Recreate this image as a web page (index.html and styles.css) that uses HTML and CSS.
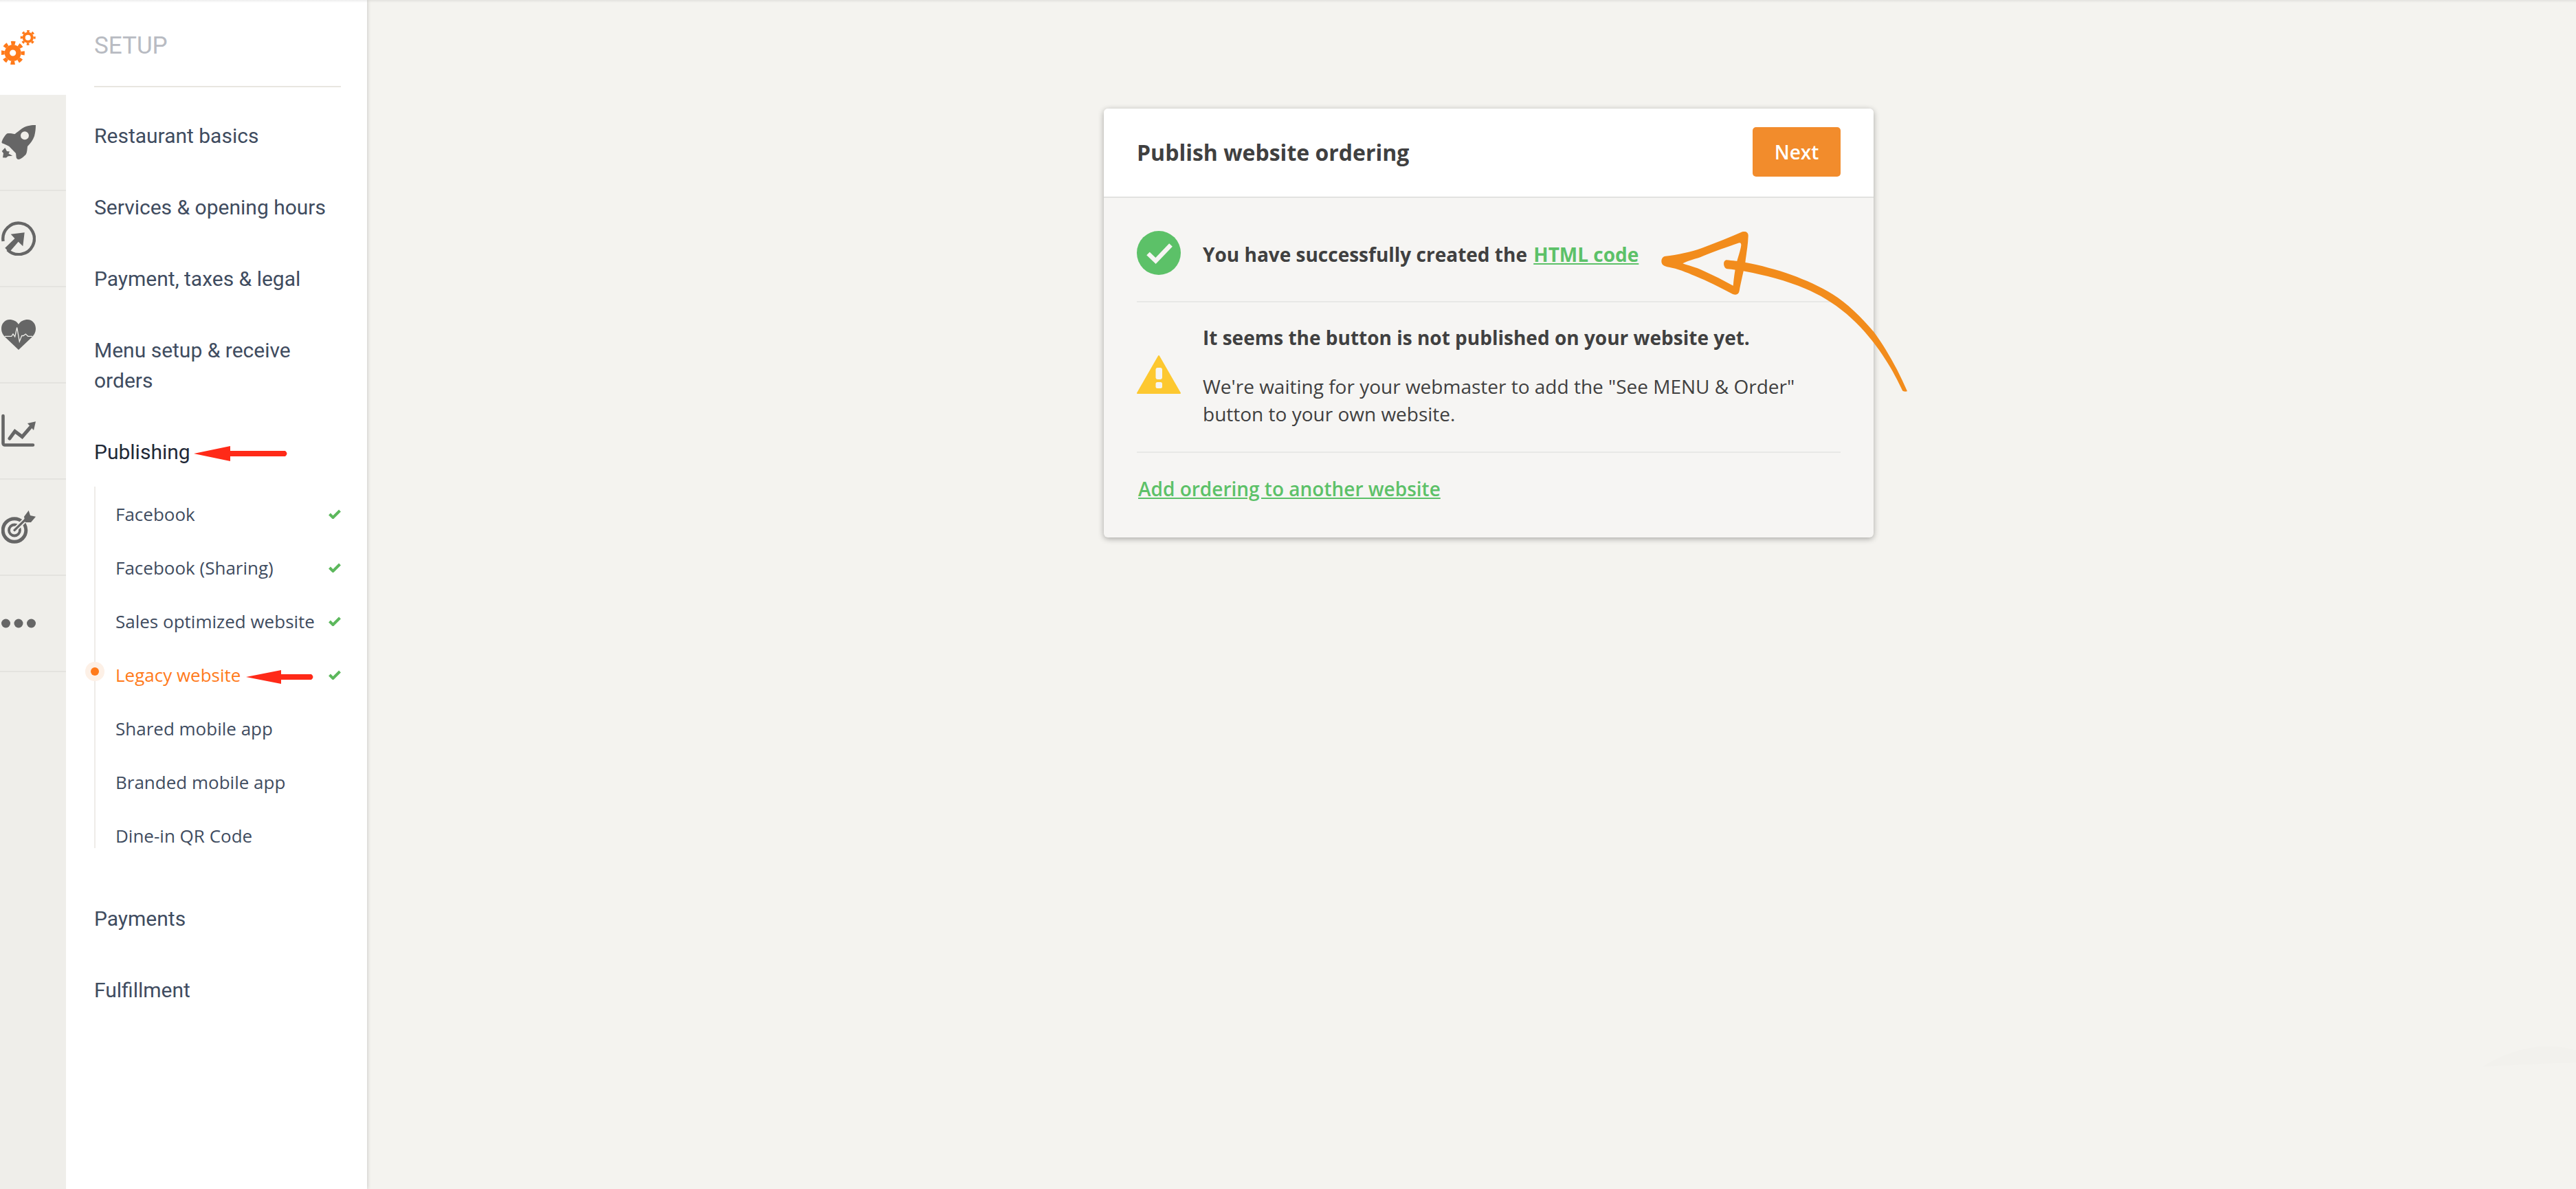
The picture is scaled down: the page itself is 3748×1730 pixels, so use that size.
FILE: index.html
```html
<!DOCTYPE html>
<html lang="en">
<head>
    <meta charset="UTF-8">
    <title>Publish website ordering</title>
    <link rel="stylesheet" href="styles.css">
</head>
<body>

    <div class="app">
        <!-- Icon rail -->
        <nav class="rail">
            <div class="rail-cell rail-cell-active">
                <svg class="rail-icon icon-orange" viewBox="0 0 50 50">
                    <circle cx="16.7" cy="33" r="8.3" fill="none" stroke="#ff7a1a" stroke-width="7.4"/>
                    <circle cx="16.7" cy="33" r="14.6" fill="none" stroke="#ff7a1a" stroke-width="5.2" stroke-dasharray="6 5.47" stroke-dashoffset="3"/>
                    <circle cx="38.7" cy="10.7" r="6" fill="none" stroke="#ff7a1a" stroke-width="4"/>
                    <circle cx="38.7" cy="10.7" r="9.4" fill="none" stroke="#ff7a1a" stroke-width="3.2" stroke-dasharray="3.6 3.78" stroke-dashoffset="1.8"/>
                </svg>
            </div>
            <div class="rail-cell">
                <svg class="rail-icon" viewBox="0 0 50 50">
                    <path fill-rule="evenodd" d="M50 0C45 0 38 0 30 5C26 8 22 11 19.7 13C15 12.5 11 11.5 8 12.5C5 15 2 20 .7 24C0 26 1 26.7 3 27C6 28 9 30 11.3 31L21 41C21.5 44 21.5 47 22 48C23 50 25 50.4 27 49.5C30 48 33 45.5 35.5 43C37.5 40 37.5 35 38 31C42 27 46 22 48 16C49.5 10 50 5 50 0ZM34 9.3A6 6 0 1 1 34 21.3A6 6 0 1 1 34 9.3Z"/>
                    <path d="M5.3 33L8 38L12 38.5L10.5 41.5L16.3 44.7L9.7 45.2L7 47.6L2 47.3L3 41L.7 38Z"/>
                </svg>
            </div>
            <div class="rail-cell">
                <svg class="rail-icon" viewBox="0 0 50 50">
                    <path d="M2.6 29A22.8 22.8 0 1 1 9 41.5" fill="none" stroke="#666" stroke-width="4.4"/>
                    <path d="M13.7 18.7L33.7 16.3L31.3 36.3L24.7 29.7L11.3 45.3L5.3 38.7L19.5 25Z"/>
                </svg>
            </div>
            <div class="rail-cell">
                <svg class="rail-icon" viewBox="0 0 50 50">
                    <path d="M25 10C22 5 17 3 12 3C5 3 0 9 0 16C0 22 3 26 6 29L25 47L44 29C47 26 50 22 50 16C50 9 45 3 38 3C33 3 28 5 25 10Z"/>
                    <path d="M5 27.3H14.7L17 24L19.7 28L22.7 14.5L26.3 35L29.7 26.5H32L35.3 24L38.7 27.3H45" fill="none" stroke="#efeeea" stroke-width="1.3"/>
                </svg>
            </div>
            <div class="rail-cell">
                <svg class="rail-icon" viewBox="0 0 50 50">
                    <path d="M2.5 3V43A2.5 2.5 0 0 0 5 45.5H46" fill="none" stroke="#666" stroke-width="4.6" stroke-linecap="round"/>
                    <path d="M12 36L19.7 25.5L30.3 33.5L42 20" fill="none" stroke="#666" stroke-width="5" stroke-linecap="round"/>
                    <path d="M50 11.3L38 14L47 24Z"/>
                </svg>
            </div>
            <div class="rail-cell">
                <svg class="rail-icon" viewBox="0 0 50 50">
                    <circle cx="19" cy="29.5" r="16.8" fill="none" stroke="#666" stroke-width="5"/>
                    <circle cx="19" cy="29.5" r="8" fill="none" stroke="#666" stroke-width="3.8"/>
                    <path d="M19 29.5L36 13" fill="none" stroke="#efeeea" stroke-width="7"/>
                    <path d="M19 29.5L37 12" fill="none" stroke="#666" stroke-width="3.2" stroke-linecap="round"/>
                    <path d="M39.7 .7L33 9.7L34.7 18H43L50 9.7L42 8Z"/>
                </svg>
            </div>
            <div class="rail-cell">
                <svg class="rail-icon" viewBox="0 0 50 50">
                    <circle cx="6.5" cy="25" r="6.5"/>
                    <circle cx="25" cy="25" r="6.5"/>
                    <circle cx="43.5" cy="25" r="6.5"/>
                </svg>
            </div>
        </nav>

        <!-- Setup menu -->
        <aside class="menu">
            <div class="menu-title">SETUP</div>
            <ul class="menu-list">
                <li class="menu-item">Restaurant basics</li>
                <li class="menu-item">Services &amp; opening hours</li>
                <li class="menu-item">Payment, taxes &amp; legal</li>
                <li class="menu-item">Menu setup &amp; receive orders</li>
                <li class="menu-item menu-item-open">Publishing</li>
                <li>
                    <ul class="sub-list">
                        <li class="sub-item">Facebook
                            <svg class="tick" viewBox="0 0 18 14"><path d="M1.5 7L6.5 12L16.5 2"/></svg>
                        </li>
                        <li class="sub-item">Facebook (Sharing)
                            <svg class="tick" viewBox="0 0 18 14"><path d="M1.5 7L6.5 12L16.5 2"/></svg>
                        </li>
                        <li class="sub-item">Sales optimized website
                            <svg class="tick" viewBox="0 0 18 14"><path d="M1.5 7L6.5 12L16.5 2"/></svg>
                        </li>
                        <li class="sub-item sub-item-active">Legacy website
                            <svg class="tick" viewBox="0 0 18 14"><path d="M1.5 7L6.5 12L16.5 2"/></svg>
                        </li>
                        <li class="sub-item">Shared mobile app</li>
                        <li class="sub-item">Branded mobile app</li>
                        <li class="sub-item sub-item-last">Dine-in QR Code</li>
                    </ul>
                </li>
                <li class="menu-item">Payments</li>
                <li class="menu-item">Fulfillment</li>
            </ul>
        </aside>

        <!-- Main content -->
        <main class="content">
            <section class="card">
                <header class="card-header">
                    <h2>Publish website ordering</h2>
                    <button class="btn-next" type="button">Next</button>
                </header>
                <div class="card-body">
                    <div class="row row-success">
                        <svg class="row-icon" viewBox="0 0 64 64">
                            <circle cx="32" cy="32" r="32" fill="#5cc168"/>
                            <path d="M16.5 33L27.5 43.5L49.5 20.5" fill="none" stroke="#f6f5f3" stroke-width="6.5"/>
                        </svg>
                        <p class="strong success-text">You have successfully created the <a href="#">HTML code</a></p>
                    </div>
                    <div class="row row-warning">
                        <svg class="row-icon warning-icon" viewBox="0 0 64 58">
                            <path d="M32 2L63 56H1Z" fill="#fdc830" stroke="#fdc830" stroke-width="2" stroke-linejoin="round"/>
                            <rect x="27.5" y="19" width="9.5" height="17" rx="3" fill="#f6f5f3"/>
                            <rect x="27.5" y="40" width="9.5" height="9" rx="2.5" fill="#f6f5f3"/>
                        </svg>
                        <div>
                            <p class="strong warning-title">It seems the button is not published on your website yet.</p>
                            <p class="warning-text">We're waiting for your webmaster to add the "See MENU &amp; Order" button to your own website.</p>
                        </div>
                    </div>
                    <div class="row-link">
                        <a href="#">Add ordering to another website</a>
                    </div>
                </div>
            </section>
        </main>
    </div>

    <!-- Hand drawn notes on top of the screenshot -->
    <svg class="notes" viewBox="0 0 3748 1730">
        <path fill="#ff2a18" d="M282 660L335 649V656H415Q420 660 415 664H335V671Z"/>
        <path fill="#ff2a18" d="M358 985L409 975V981H453Q458 985 453 989H409V995Z"/>
        <g transform="translate(2400 320) scale(.33333)" fill="#f28c1c">
            <path fill-rule="evenodd" d="M52 180C52 168 58 160 70 158C120 152 180 140 230 122C290 100 350 76 405 52C420 48 432 54 431 70C430 110 422 150 418 185C412 220 400 265 392 310C390 325 378 330 362 323C310 295 250 265 200 245C160 228 120 212 85 206C62 203 52 195 52 180ZM145 190C170 200 200 205 235 222C280 242 325 265 365 287C368 255 372 225 378 195C385 165 398 130 400 110C400 100 395 98 385 102C340 118 280 138 232 158C205 170 170 175 145 190Z"/>
            <path d="M335 175C360 178 395 180 420 186C480 197 560 218 620 240C680 262 745 290 800 325C860 362 925 425 980 490C1035 565 1085 655 1125 748C1118 750 1108 750 1104 745C1085 705 1060 655 1030 610C990 545 930 470 860 410C800 360 740 325 680 300C600 265 500 240 420 225C390 220 360 216 340 214C322 212 318 178 335 175Z"/>
        </g>
        <path fill="#f2f1ed" d="M3612 1552Q3680 1510 3748 1528V1546Q3680 1548 3612 1552Z"/>
    </svg>
    <div class="top-shade"></div>

</body>
</html>
```

FILE: styles.css
```css
/* General */
* {
    box-sizing: border-box;
}

body {
    position: relative;
    margin: 0;
    width: 3748px;
    height: 1730px;
    overflow: hidden;
    background-color: #f4f3ef;
    font-family: "Open Sans", sans-serif;
    color: #404040;
}

ul {
    list-style: none;
    margin: 0;
    padding: 0;
}

.app {
    display: flex;
    height: 100%;
}

/* Icon rail */
.rail {
    width: 96px;
    flex-shrink: 0;
    background-color: #efeeea;
}

.rail-cell {
    display: flex;
    align-items: center;
    height: 140px;
    padding-left: 2px;
    border-bottom: 2px solid #e4e3df;
}

.rail-cell-active {
    height: 138px;
    background-color: #fff;
    border-bottom: none;
}

.rail-icon {
    display: block;
    width: 50px;
    height: 50px;
    fill: #666;
}

/* Setup menu */
.menu {
    width: 438px;
    flex-shrink: 0;
    padding: 0 38px 0 41px;
    background-color: #fff;
    box-shadow: 1px 0 5px rgba(0, 0, 0, 0.16);
    clip-path: inset(0 -10px 0 0);
    font-family: Roboto, sans-serif;
}

.menu-title {
    height: 127px;
    padding-top: 45px;
    border-bottom: 2px solid #e8e6e0;
    font-family: Roboto, sans-serif;
    font-size: 35px;
    line-height: 44px;
    color: #b8bbc2;
}

.menu-list {
    padding-top: 17px;
}

.menu-item {
    padding: 32px 0 28px;
    font-size: 30px;
    line-height: 44px;
    color: #3f4c5f;
}

.menu-item-open {
    color: #1f2937;
}

.sub-list {
    margin-bottom: 49px;
    padding-left: 29px;
    border-left: 2px solid #eeece8;
    font-family: "Open Sans", sans-serif;
}

.sub-item {
    position: relative;
    display: flex;
    justify-content: space-between;
    align-items: center;
    height: 78px;
    padding-top: 1px;
    font-size: 26px;
    color: #3f4c5f;
}

.sub-item-last {
    height: 58px;
    padding-top: 1px;
    align-items: flex-start;
    line-height: 78px;
}

.sub-item-active {
    color: #ff7a1a;
}

/* Dot over the line of the sub menu */
.sub-item-active::before {
    content: "";
    position: absolute;
    left: -36px;
    top: 29px;
    width: 12px;
    height: 12px;
    border-radius: 50%;
    background-color: #ff7a1a;
    box-shadow: 0 0 0 8px #fdf0e6;
}

.tick {
    width: 18px;
    height: 14px;
    fill: none;
    stroke: #5cb85c;
    stroke-width: 4;
}

/* Main content */
.content {
    flex: 1;
    padding: 158px 0 0 1072px;
}

.card {
    width: 1120px;
    height: 624px;
    border-radius: 6px;
    overflow: hidden;
    background-color: #f6f5f3;
    box-shadow: 0 2px 8px rgba(0, 0, 0, 0.32);
}

.card-header {
    display: flex;
    justify-content: space-between;
    align-items: center;
    height: 130px;
    padding: 0 48px 2px;
    background-color: #fff;
    border-bottom: 2px solid #e2e2e0;
}

.card-header h2 {
    margin: 0;
    font-size: 32px;
    font-weight: 700;
}

.btn-next {
    width: 128px;
    height: 72px;
    padding: 0;
    border: none;
    border-radius: 5px;
    background-color: #f28c2c;
    color: #fff;
    font-family: "Open Sans", sans-serif;
    font-size: 28px;
    font-weight: 600;
}

.card-body {
    padding: 0 48px;
    font-size: 28px;
    line-height: 41px;
}

.card-body p {
    margin: 0;
}

.card-body a {
    color: #5cc168;
}

.strong {
    font-weight: 700;
}

.row {
    display: flex;
    align-items: center;
    gap: 32px;
    border-bottom: 2px solid #e8e8e6;
}

.row-icon {
    display: block;
    width: 64px;
    flex-shrink: 0;
}

.row-success {
    height: 152px;
    padding: 48px 0 38px;
}

.success-text {
    padding-top: 4px;
}

.success-text a {
    margin-left: 2px;
}

.row-warning {
    height: 219px;
    padding: 32px 0 37px;
}

.warning-icon {
    margin-top: -2px;
}

.card-body .warning-title {
    margin-bottom: 30px;
}

.warning-text {
    line-height: 40px;
}

.row-link {
    margin-top: -2px;
    padding: 34px 0 0 2px;
    font-weight: 600;
}

/* Hand drawn notes */
.notes {
    position: absolute;
    left: 0;
    top: 0;
    width: 3748px;
    height: 1730px;
    pointer-events: none;
}

.top-shade {
    position: absolute;
    left: 0;
    top: 0;
    width: 100%;
    height: 4px;
    background: linear-gradient(rgba(0, 0, 0, 0.07), rgba(0, 0, 0, 0));
}
```
